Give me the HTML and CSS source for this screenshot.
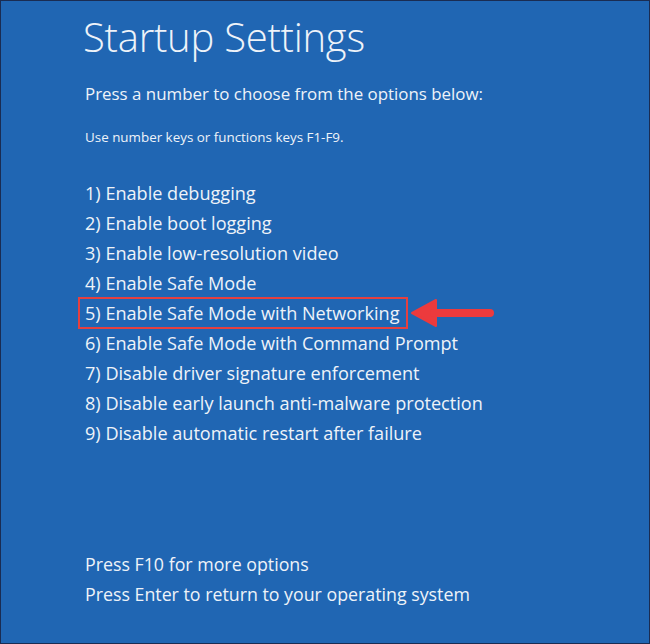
FILE: index.html
```html
<!DOCTYPE html>
<html>
<head>
<meta charset="utf-8">
<link rel="stylesheet" href="styles.css">
</head>
<body>
<div class="screen">
  <h1 class="title">Startup Settings</h1>
  <p class="lead">Press a number to choose from the options below:</p>
  <p class="hint">Use number keys or functions keys F1-F9.</p>
  <ul class="options">
    <li>1) Enable debugging</li>
    <li>2) Enable boot logging</li>
    <li>3) Enable low-resolution video</li>
    <li>4) Enable Safe Mode</li>
    <li class="selected"><span class="box">5) Enable Safe Mode with Networking</span>
      <svg class="arrow" width="86" height="32" viewBox="0 0 86 32">
        <path d="M3 16 L27 3 L27 29 Z" fill="#ec3a3d" stroke="#ec3a3d" stroke-width="2" stroke-linejoin="round"/>
        <line x1="25" y1="16" x2="81" y2="16" stroke="#ec3a3d" stroke-width="8" stroke-linecap="round"/>
      </svg>
    </li>
    <li>6) Enable Safe Mode with Command Prompt</li>
    <li>7) Disable driver signature enforcement</li>
    <li>8) Disable early launch anti-malware protection</li>
    <li>9) Disable automatic restart after failure</li>
  </ul>
  <div class="footer">
    <p>Press F10 for more options</p>
    <p>Press Enter to return to your operating system</p>
  </div>
</div>
</body>
</html>
```
FILE: styles.css
```css
html, body {
  margin: 0;
  padding: 0;
  background: #1c2f58;
}
.screen {
  box-sizing: border-box;
  width: 650px;
  height: 644px;
  border: 1px solid #1a2c52;
  background: #2066b3;
  color: #eef3f9;
  font-family: "Open Sans", "Noto Sans", sans-serif;
  padding: 0 0 0 84px;
  display: flex;
  flex-direction: column;
}
.title {
  margin: 12px 0 0 -2px;
  font-size: 40px;
  font-weight: 300;
  line-height: 48px;
  letter-spacing: -0.25px;
}
.lead {
  margin: 21px 0 0 0;
  font-size: 16.9px;
  font-weight: 400;
  line-height: 24px;
}
.hint {
  margin: 22px 0 0 0;
  font-size: 13.4px;
  line-height: 18px;
}
.options {
  list-style: none;
  margin: 32px 0 0 0;
  padding: 0;
  font-size: 18.1px;
  line-height: 30px;
}
.options li {
  height: 30px;
  white-space: nowrap;
}
.selected {
  display: flex;
  align-items: center;
}
.box {
  display: inline-block;
  margin-left: -7px;
  padding: 0 7px 0 5px;
  border: 2px solid #e5403f;
  line-height: 28px;
  height: 28px;
}
.arrow {
  margin-left: 1px;
  flex: none;
}
.footer {
  margin-top: auto;
  margin-bottom: 34px;
  font-size: 17.8px;
  line-height: 30px;
}
.footer p {
  margin: 0;
}
```
